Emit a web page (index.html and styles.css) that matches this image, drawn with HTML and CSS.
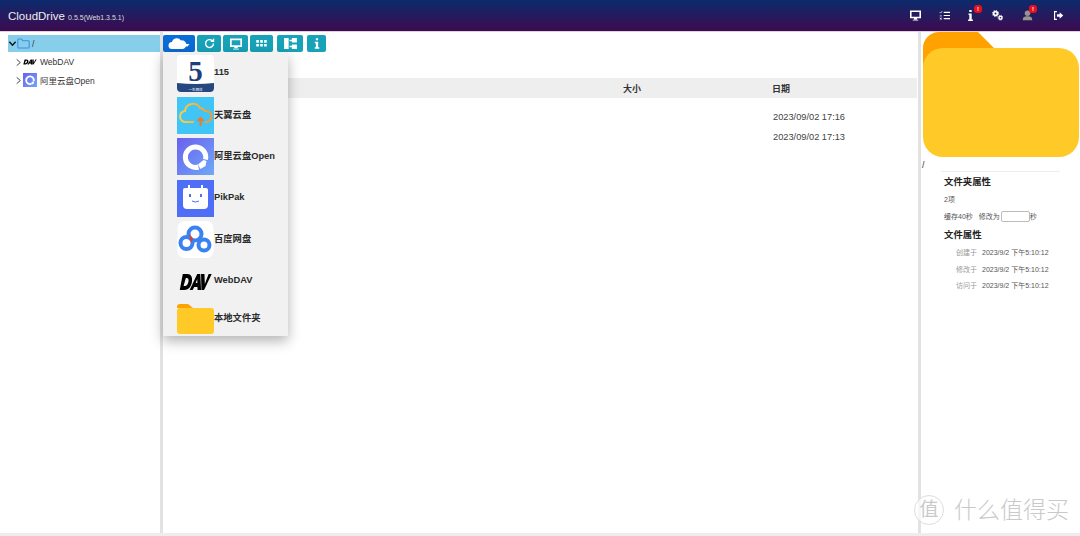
FILE: index.html
```html
<!DOCTYPE html>
<html lang="zh">
<head>
<meta charset="utf-8">
<title>CloudDrive</title>
<link rel="stylesheet" href="styles.css">
</head>
<body>
<svg class="defs" width="0" height="0">
  <defs>
    <linearGradient id="ali" x1="0" y1="0" x2="1" y2="1"><stop offset="0" stop-color="#6a60ee"/><stop offset="1" stop-color="#6fa8f8"/></linearGradient>
    <linearGradient id="tyc" x1="0" y1="0" x2="1" y2="0"><stop offset="0" stop-color="#f6d24a"/><stop offset="1" stop-color="#ee9a36"/></linearGradient>
    <g id="aliG"><rect width="37" height="37" fill="url(#ali)"/><path d="M28.500 21.500A10.200 10.200 0 1 0 21.500 29" fill="none" stroke="#fff" stroke-width="5"/><path d="M21 26.500l5.500-4.500 3 1-1 5-5 3z" fill="#fff"/></g>
    <g id="davG"><path d="M1 17 5 1h6c5 0 7 3 6 8s-5 8-10 8zM6 13h2c2 0 4-2 4.500-4.500S12 5 10 5H9zM14 17 24 1h4l1 16h-4.500l-.2-3H20l-2 3zM22 10h2.200l-.2-4zM29 1h4.500l.5 10 5-10H43L33 17h-3.500z" fill="#000"/></g>
    <g id="pc"><path d="M1 1.500h12v8H1z" fill="none" stroke="currentColor" stroke-width="2"/><path d="M5 12h4v-2H5zM3.500 12.500h7v1h-7z" fill="currentColor"/></g>
  </defs>
</svg>
<header class="topbar">
  <div class="brand">CloudDrive <small>0.5.5(Web1.3.5.1)</small></div>
  <nav class="top-icons">
    <svg class="ti" viewBox="0 0 14 14"><use href="#pc"/></svg>
    <svg class="ti" viewBox="0 0 14 14"><path d="M6 3h8M6 7h8M6 11h8" stroke="currentColor" stroke-width="1.500"/><path d="M1 3l1 1 2-2.500M1 7.500h2.500M1 10l2.500 2M3.500 10 1 12" stroke="currentColor" fill="none"/></svg>
    <span class="ti-wrap"><svg class="ti" viewBox="0 0 14 14"><path d="M5.500 0h3v2.500h-3zM4.500 4.500h4V12h1.500v2H4v-2h1.500V6.500h-1z" fill="currentColor"/></svg><b class="badge">!</b></span>
    <svg class="ti" viewBox="0 0 14 14"><g fill="none" stroke="currentColor"><circle cx="4.500" cy="4.500" r="2.400" stroke-width="2.200"/><circle cx="4.500" cy="4.500" r="4" stroke-width="1.200" stroke-dasharray="1.500 1.640"/><circle cx="10.800" cy="9.800" r="1.900" stroke-width="1.800"/><circle cx="10.800" cy="9.800" r="3.100" stroke-width="1" stroke-dasharray="1.200 1.230"/></g></svg>
    <span class="ti-wrap user"><svg class="ti dim" viewBox="0 0 14 14"><circle cx="7" cy="4" r="3.500" fill="currentColor"/><path d="M1 13c0-4 2-5 6-5s6 1 6 5z" fill="currentColor"/></svg><b class="badge">!</b></span>
    <svg class="ti" viewBox="0 0 14 14"><path d="M5 2H2v10h3" fill="none" stroke="currentColor" stroke-width="1.500"/><path d="M5 5.500h3.500V3L13 7l-4.500 4V8.500H5z" fill="currentColor"/></svg>
  </nav>
</header>
<main class="layout">
  <aside class="tree">
    <div class="node root">
      <svg class="chev" viewBox="0 0 10 10"><path d="M1.500 3 5 7l3.500-4" fill="none" stroke="#111" stroke-width="1.500"/></svg>
      <svg class="folder-o" viewBox="0 0 16 13"><path d="M1 3V2a1 1 0 0 1 1-1h3.500L7 3h7a1 1 0 0 1 1 1v7a1 1 0 0 1-1 1H2a1 1 0 0 1-1-1z" fill="none" stroke="#3f8ce8" stroke-width="1.300"/></svg>
      <span>/</span>
    </div>
    <div class="node child">
      <svg class="chev" viewBox="0 0 10 10"><path d="M3 1.500 7 5 3 8.500" fill="none" stroke="#333"/></svg>
      <svg class="tree-ic" viewBox="0 -6 44 30"><use href="#davG"/></svg>
      <span>WebDAV</span>
    </div>
    <div class="node child">
      <svg class="chev" viewBox="0 0 10 10"><path d="M3 1.500 7 5 3 8.500" fill="none" stroke="#333"/></svg>
      <svg class="tree-ic" viewBox="0 0 37 37"><use href="#aliG"/></svg>
      <span>阿里云盘Open</span>
    </div>
  </aside>
  <section class="center">
    <div class="toolbar">
      <button class="btn primary b-cloud"><svg viewBox="0 0 22 12" width="22" height="12"><path d="M4 11a3.500 3.500 0 0 1 0-7 5 5 0 0 1 9-1.500A3.500 3.500 0 0 1 15 11z" fill="#fff"/><path d="M16.500 6h5l-2.500 3z" fill="#fff"/></svg></button>
      <button class="btn"><svg viewBox="0 0 14 14" width="11" height="11"><path d="M12 7a5 5 0 1 1-1.500-3.500" fill="none" stroke="#fff" stroke-width="1.800"/><path d="M8 5h5V0z" fill="#fff"/></svg></button>
      <button class="btn b-pc"><svg viewBox="0 0 14 14" width="12" height="12"><use href="#pc"/></svg></button>
      <button class="btn b-grid"><svg viewBox="0 0 12 8" width="11" height="7"><path d="M0 0h3v3H0zM4.500 0h3v3h-3zM9 0h3v3H9zM0 4.500h3v3H0zM4.500 4.500h3v3h-3zM9 4.500h3v3H9z" fill="#fff"/></svg></button>
      <button class="btn b-tree"><svg viewBox="0 0 14 12" width="13" height="11"><path d="M0 0h5v12H0zM6 2h2.500v-2H14v5H8.500V3.500H6zM6 8.500h2.500V7H14v5H8.500v-2H6z" fill="#fff"/></svg></button>
      <button class="btn b-info"><svg viewBox="0 0 8 14" width="6" height="11"><path d="M2.500 0h3v2.500h-3zM1 4.500h4.500V12H7v2H1v-2h1.500V6.500H1z" fill="#fff"/></svg></button>
    </div>
    <div class="table">
      <div class="thead row"><span class="c-name"></span><span class="c-size">大小</span><span class="c-date">日期</span></div>
      <div class="tbody">
        <div class="row"><span class="c-name"></span><span class="c-size"></span><span class="c-date">2023/09/02 17:16</span></div>
        <div class="row"><span class="c-name"></span><span class="c-size"></span><span class="c-date">2023/09/02 17:13</span></div>
      </div>
    </div>
    <div class="menu">
      <div class="item">
        <svg class="logo" viewBox="0 0 37 37"><rect width="37" height="37" rx="4" fill="#fff"/><path d="M0 28q18.500 2 37 0v5a4 4 0 0 1-4 4H4a4 4 0 0 1-4-4z" fill="#24487f"/><text class="five" x="18.500" y="26" text-anchor="middle">5</text><text class="slogan" x="18.500" y="35.500" text-anchor="middle">一生相伴</text></svg>
        <span>115</span>
      </div>
      <div class="item">
        <svg class="logo" viewBox="0 0 37 37"><rect width="37" height="37" fill="#41c5f6"/><path d="M17 25H9a5.500 5.500 0 0 1-1-11 8 8 0 0 1 15-3 6 6 0 0 1 5 3 5.500 5.500 0 0 1 2 11h-2" fill="none" stroke="url(#tyc)" stroke-width="2"/><path d="M23.500 29v-8m-3 3 3-3 3 3" fill="none" stroke="#ea7c2b" stroke-width="2"/></svg>
        <span>天翼云盘</span>
      </div>
      <div class="item"><svg class="logo" viewBox="0 0 37 37"><use href="#aliG"/></svg><span>阿里云盘Open</span></div>
      <div class="item">
        <svg class="logo" viewBox="0 0 37 37"><rect width="37" height="37" fill="#4f6ef7"/><path d="M6 10a2 2 0 0 1 2-2h21a2 2 0 0 1 2 2v15a4 4 0 0 1-4 4H10a4 4 0 0 1-4-4z" fill="#fff"/><path d="M12 8V5M25 8V5" stroke="#fff" stroke-width="2"/><path d="M13 14v3M24 14v3" stroke="#4f6ef7" stroke-width="2"/><path d="M15 21q3.500 2 7 0" fill="none" stroke="#4f6ef7"/></svg>
        <span>PikPak</span>
      </div>
      <div class="item">
        <svg class="logo" viewBox="0 0 37 37"><rect x=".5" width="36" height="37" rx="7" fill="#fff"/><g fill="none" stroke="#3a82f2" stroke-width="4"><circle cx="9.500" cy="22" r="6"/><circle cx="18" cy="13" r="6.500"/><circle cx="27" cy="24" r="5.500"/></g><path d="M12 12l4 6-2 4z" fill="#e0402f"/></svg>
        <span>百度网盘</span>
      </div>
      <div class="item"><svg class="logo" viewBox="0 0 37 37"><use href="#davG" transform="translate(2 10) scale(.76 1)"/></svg><span>WebDAV</span></div>
      <div class="item last">
        <svg class="logo" viewBox="0 0 37 30"><path d="M0 3a3 3 0 0 1 3-3h8l5 4H0z" fill="#ffa200"/><rect y="4" width="37" height="26" rx="3" fill="#ffc928"/></svg>
        <span>本地文件夹</span>
      </div>
    </div>
  </section>
  <aside class="detail">
    <svg class="big-folder" viewBox="0 0 156 125"><path d="M0 16A16 16 0 0 1 16 0h39l16 16v30H0z" fill="#ffa200"/><rect y="16" width="156" height="109" rx="20" fill="#ffc928"/></svg>
    <div class="path">/</div>
    <div class="props">
      <h4>文件夹属性</h4>
      <p class="count">2项</p>
      <p class="cache"><span>缓存40秒</span><span class="change">修改为</span><input class="sec" type="text"><span>秒</span></p>
      <h4 class="second">文件属性</h4>
      <dl>
        <div><dt>创建于</dt><dd>2023/9/2 下午5:10:12</dd></div>
        <div><dt>修改于</dt><dd>2023/9/2 下午5:10:12</dd></div>
        <div><dt>访问于</dt><dd>2023/9/2 下午5:10:12</dd></div>
      </dl>
    </div>
  </aside>
</main>
<div class="watermark"><span class="seal">值</span><span class="wm-text">什么值得买</span></div>
</body>
</html>
```
FILE: styles.css
```css
* { box-sizing: border-box; }
html, body { margin: 0; height: 100%; overflow: hidden; }
body {
  position: relative;
  display: flex;
  flex-direction: column;
  height: 536px;
  background: #fff;
  color: #333;
  font-family: "Liberation Sans", "Noto Sans CJK SC", sans-serif;
  font-size: 9px;
}
.defs { position: absolute; }
.topbar {
  flex: 0 0 32px;
  display: flex;
  align-items: center;
  justify-content: space-between;
  padding: 0 16px 0 8px;
  background: linear-gradient(#0c2b6c, #3e0a50);
  border-bottom: 1px solid #d8d8dc;
  color: #fff;
}
.brand { font-size: 11.500px; color: #eee; }
.brand small { font-size: 7px; color: #ddd; }
.top-icons { display: flex; align-items: center; color: #fff; }
.top-icons > :nth-child(2) { margin-left: 18px; }
.top-icons > :nth-child(3) { margin-left: 15px; }
.top-icons > :nth-child(4) { margin-left: 16px; }
.top-icons > :nth-child(5) { margin-left: 19px; }
.top-icons > :nth-child(6) { margin-left: 20px; }
.ti { display: block; width: 11px; height: 11px; }
.ti.dim { color: #99938f; }
.ti-wrap { position: relative; display: block; }
.badge {
  position: absolute;
  top: -5px;
  right: -6px;
  width: 8px;
  height: 8px;
  border-radius: 3px;
  background: #e8101c;
  color: #fff;
  font-size: 6px;
  line-height: 8px;
  text-align: center;
}
.user .badge { right: -4px; }
.layout { flex: 1; display: flex; min-height: 0; border-bottom: 3px solid #ededed; }
.tree {
  flex: 0 0 163px;
  padding: 3px 0 0 8px;
  border-right: 3px solid #e2e2e2;
}
.node { display: flex; align-items: center; height: 18px; font-size: 8.500px; color: #333; }
.node.root { width: 152px; background: #87ceeb; height: 17px; margin-bottom: 1px; }
.child { padding-left: 6px; }
.chev { width: 9px; height: 9px; flex: none; }
.folder-o { width: 13px; height: 11px; margin-right: 2px; flex: none; }
.tree-ic { width: 14px; height: 14px; margin: 0 3px 0 0; flex: none; }
.center { position: relative; flex: 1; min-width: 0; padding: 3px 0 0 0; border-right: 3px solid #e2e2e2; }
.toolbar { display: flex; gap: 2px; }
.btn {
  display: flex;
  align-items: center;
  justify-content: center;
  width: 24px;
  height: 17px;
  padding: 0;
  border: 0;
  border-radius: 2px;
  background: #17a2b8;
  color: #fff;
}
.btn.primary { background: #0a6cd6; }
.b-cloud { width: 32px; }
.b-pc { width: 25px; }
.b-grid { width: 23px; }
.b-tree { width: 26px; margin-left: 2px; }
.b-info { width: 19px; margin-left: 2px; }
.table { margin-top: 26px; }
.row { display: flex; align-items: center; height: 20px; }
.thead { background: #eee; font-size: 9px; font-weight: 700; color: #333; margin-right: 1px; }
.c-name { flex: 0 0 460px; }
.c-size { flex: 0 0 149px; }
.tbody { padding-top: 9px; font-size: 9.250px; color: #444; }
.tbody .c-date { padding-left: 1px; }
.menu {
  position: absolute;
  left: 0;
  top: 20px;
  width: 125px;
  height: 284px;
  padding: 1px 0 0 14px;
  background: #f1f1f1;
  box-shadow: 0 5px 12px rgba(0, 0, 0, .3);
}
.item { display: flex; align-items: center; height: 41.500px; font-size: 9.300px; font-weight: 700; color: #2a2a2a; }
.item span { padding-bottom: 3px; }
.item.last { height: 33px; }
.logo { width: 37px; height: 37px; flex: none; }
.item.last .logo { height: 30px; }
.five { font-family: "Liberation Serif", serif; font-size: 29px; fill: #1f3f7c; }
.slogan { font-size: 3.500px; fill: #fff; font-weight: 400; }
.detail { flex: 0 0 159px; min-width: 0; }
.big-folder { display: block; width: 156px; height: 125px; margin-left: 2px; }
.path { font-size: 9px; margin: 3px 0 0 1px; height: 11px; line-height: 11px; }
.props { margin: 0 20px; padding: 3px 0 0 3px; border-top: 1px solid #eee; }
.props h4 { margin: 0; font-size: 9.400px; line-height: 14px; color: #222; }
.props .second { margin-top: 6px; }
.props p { margin: 0; font-size: 7px; color: #555; display: flex; align-items: center; }
.count { height: 12px; margin-top: 4px !important; }
.cache { height: 12px; margin-top: 5px !important; }
.change { margin-left: 6px; margin-right: 1px; }
.sec { width: 29px; height: 11px; padding: 0; border: 1px solid #bbb; border-radius: 2px; background: #fff; }
dl { margin: 2px 0 0; }
dl div { display: flex; height: 16.400px; align-items: center; font-size: 7px; }
dt { width: 33px; text-align: right; color: #999; margin-right: 5px; }
dd { margin: 0; color: #555; white-space: nowrap; }
.watermark {
  position: absolute;
  right: 11px;
  bottom: 11px;
  display: flex;
  align-items: center;
  gap: 10px;
  color: #c9c9c9;
}
.seal {
  width: 30px;
  height: 30px;
  border: 1px solid #ddd;
  border-radius: 50%;
  background: rgba(255, 255, 255, .7);
  font-size: 19px;
  line-height: 28px;
  text-align: center;
}
.wm-text { font-size: 23px; line-height: 30px; font-weight: 300; }
```
